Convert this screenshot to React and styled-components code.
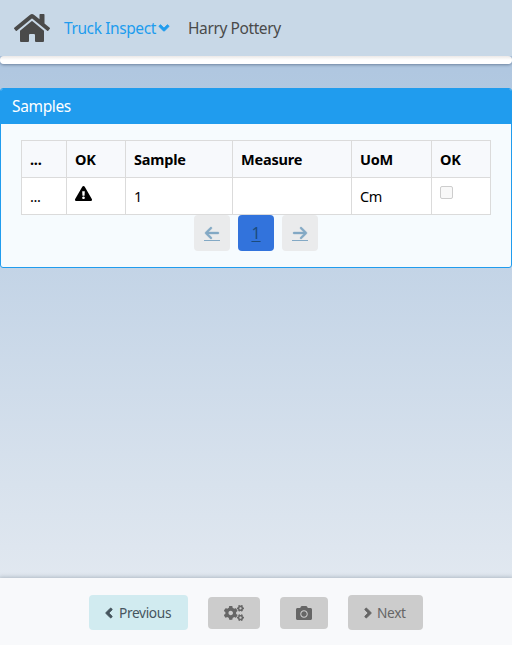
import React from "react";
import styled, { createGlobalStyle } from "styled-components";
import {
  FaHome,
  FaAngleDown,
  FaAngleLeft,
  FaAngleRight,
  FaCogs,
  FaCamera,
  FaExclamationTriangle,
} from "react-icons/fa";
import { FaArrowLeft, FaArrowRight } from "react-icons/fa6";

const GlobalStyle = createGlobalStyle`
  *, *::before, *::after { box-sizing: border-box; }
  html, body { margin: 0; padding: 0; }
  body {
    font-family: "Noto Sans", "Open Sans", sans-serif;
    font-size: 16px;
    line-height: 24px;
    color: #000;
    overflow: hidden;
  }
  svg { display: block; flex: none; }
`;

const Page = styled.div`
  display: flex;
  flex-direction: column;
  height: 645px;
  background: linear-gradient(#b0c7e0 70px, #e1e8f0 578px);
`;

const Navbar = styled.nav`
  display: flex;
  align-items: center;
  flex: none;
  height: 56px;
  padding-left: 14px;
  background: #c8d8e7;
  color: #4a4a4a;
`;

const NavItem = styled.a`
  display: flex;
  align-items: center;
  width: ${(p) => p.$width};
  margin-left: ${(p) => p.$gap};
  white-space: nowrap;
  font-size: 15.5px;
  letter-spacing: -0.4px;
  color: ${(p) => (p.$active ? "#209cee" : "#4a4a4a")};

  svg {
    stroke: currentColor;
    stroke-width: 24px;
  }
`;

const Strip = styled.div`
  flex: none;
  height: 8px;
  border-radius: 4px;
  background: linear-gradient(#ebe8e7, #fff 4px);
  box-shadow: 0 1px 3px rgba(10, 30, 60, 0.4);
  clip-path: inset(0 0 -6px 0);
`;

const Panel = styled.section`
  flex: none;
  height: 180px;
  margin-top: 24px;
  border: 1px solid #209cee;
  border-radius: 3px;
  background: #f6fbfe;
  overflow: hidden;
`;

const PanelHeading = styled.header`
  height: 35px;
  padding: 5px 11px 0;
  background: #209cee;
  color: #fff;
  font-size: 15.5px;
  letter-spacing: -0.35px;
`;

const PanelBody = styled.div`
  padding: 16px 20px 0;
`;

const Table = styled.table`
  width: 470px;
  table-layout: fixed;
  border-collapse: collapse;
  background: #fff;
  font-size: 14.5px;
  letter-spacing: -0.35px;
`;

const Col = styled.col`
  width: ${(p) => p.$width}px;
`;

const HeadCell = styled.th`
  height: 37px;
  padding: 0 8px 1px;
  border: 1px solid #dbdbdb;
  background: #f7f9fc;
  text-align: left;
  font-weight: 700;
  letter-spacing: -0.2px;
`;

const Cell = styled.td`
  height: 37px;
  padding: ${(p) => (p.$top ? `${p.$top}px 8px 0` : "0 8px")};
  border: 1px solid #dbdbdb;
  vertical-align: ${(p) => (p.$top ? "top" : "middle")};
`;

const CheckBox = styled.span`
  display: block;
  width: 13px;
  height: 13px;
  border: 1px solid #cdcdcd;
  border-radius: 2px;
  background: #f8f8f8;
`;

const Pagination = styled.nav`
  display: flex;
  justify-content: center;
  gap: 8px;
`;

const PageLink = styled.a`
  display: flex;
  flex-direction: column;
  align-items: center;
  width: 36px;
  height: 36px;
  padding-top: ${(p) => (p.$current ? "6px" : "10px")};
  border-radius: 4px;
  background: ${(p) => (p.$current ? "#3273dc" : "#eaebec")};
  color: ${(p) => (p.$current ? "#1c4b7c" : "#83a9c5")};
  text-decoration: underline;
  text-underline-offset: 2px;
  text-decoration-thickness: 1px;

  svg {
    stroke: currentColor;
    stroke-width: 12px;
  }
`;

const ArrowBox = styled.span`
  height: 16px;
  border-bottom: 1px solid #83a9c5;
`;

const Footer = styled.footer`
  display: flex;
  align-items: center;
  justify-content: center;
  gap: 20px;
  flex: none;
  height: 67px;
  margin-top: auto;
  padding-top: 2px;
  background: #f8f9fb;
  box-shadow: 0 0 4px 1px rgba(80, 100, 115, 0.35);
`;

const Button = styled.button`
  display: flex;
  align-items: center;
  justify-content: ${(p) => (p.$small ? "center" : "flex-start")};
  gap: ${(p) => (p.$primary ? "2px" : "1px")};
  width: ${(p) => p.$width}px;
  height: ${(p) => (p.$small ? "32px" : "35px")};
  padding: ${(p) => (p.$small ? "0" : "0 0 0 12px")};
  border: 0;
  border-radius: 4px;
  background: ${(p) => (p.$primary ? "#d1ebf0" : "#cccccc")};
  color: ${(p) => (p.$primary ? "#46555e" : "#666666")};
  font: 13.7px/20px "Noto Sans", "Open Sans", sans-serif;
  letter-spacing: -0.35px;

  svg {
    stroke: currentColor;
    stroke-width: ${(p) => (p.$small ? "0" : "24px")};
  }
`;

const headings = ["...", "OK", "Sample", "Measure", "UoM", "OK"];
const widths = [45, 59, 107, 119, 80, 59];

export default function App() {
  return (
    <>
      <GlobalStyle />
      <Page>
        <Navbar>
          <FaHome size={36} />
          <NavItem $active $gap="14px" $width="108px">
            <span>Truck Inspect</span>
            <FaAngleDown size={16} />
          </NavItem>
          <NavItem $gap="16px">Harry Pottery</NavItem>
        </Navbar>
        <Strip />
        <Panel>
          <PanelHeading>Samples</PanelHeading>
          <PanelBody>
            <Table>
              <colgroup>
                {widths.map((w, i) => (
                  <Col key={i} $width={w} />
                ))}
              </colgroup>
              <thead>
                <tr>
                  {headings.map((h, i) => (
                    <HeadCell key={i}>{h}</HeadCell>
                  ))}
                </tr>
              </thead>
              <tbody>
                <tr>
                  <Cell>...</Cell>
                  <Cell $top={7}>
                    <FaExclamationTriangle size={17} />
                  </Cell>
                  <Cell>1</Cell>
                  <Cell />
                  <Cell>Cm</Cell>
                  <Cell $top={8}>
                    <CheckBox />
                  </Cell>
                </tr>
              </tbody>
            </Table>
            <Pagination>
              <PageLink>
                <ArrowBox>
                  <FaArrowLeft size={16} />
                </ArrowBox>
              </PageLink>
              <PageLink $current>1</PageLink>
              <PageLink>
                <ArrowBox>
                  <FaArrowRight size={16} />
                </ArrowBox>
              </PageLink>
            </Pagination>
          </PanelBody>
        </Panel>
        <Footer>
          <Button $primary $width={99}>
            <FaAngleLeft size={16} />
            Previous
          </Button>
          <Button $small $width={52}>
            <FaCogs size={20} />
          </Button>
          <Button $small $width={48}>
            <FaCamera size={16} />
          </Button>
          <Button $width={75}>
            <FaAngleRight size={16} />
            Next
          </Button>
        </Footer>
      </Page>
    </>
  );
}
